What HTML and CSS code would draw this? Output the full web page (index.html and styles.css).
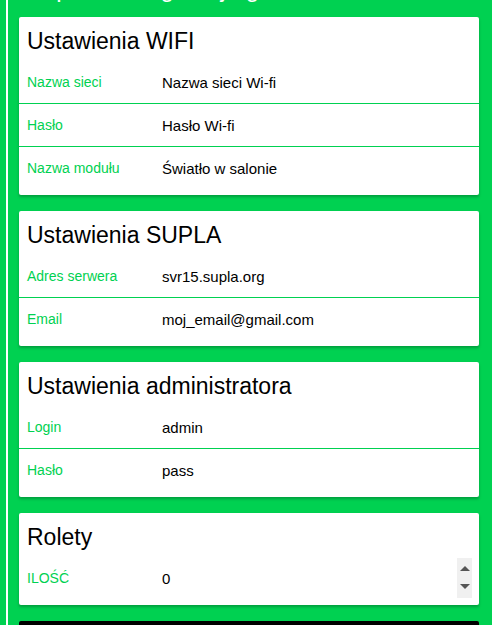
FILE: index.html
```html
<!DOCTYPE html>
<html lang="pl">
<head>
    <meta charset="UTF-8">
    <meta name="viewport" content="width=device-width, initial-scale=1.0">
    <title>Konfiguracja SUPLA</title>
    <link rel="stylesheet" href="styles.css">
</head>
<body>

<div class="page">
    <h1 class="page-title">Supla - konfiguracja gniazda</h1>

    <form id="configForm">
        <div class="box">
            <h2>Ustawienia WIFI</h2>
            <div class="row">
                <label for="sid">Nazwa sieci</label>
                <input type="text" id="sid" value="Nazwa sieci Wi-fi">
            </div>
            <div class="row">
                <label for="wpw">Hasło</label>
                <input type="text" id="wpw" value="Hasło Wi-fi">
            </div>
            <div class="row">
                <label for="modname">Nazwa modułu</label>
                <input type="text" id="modname" value="Światło w salonie">
            </div>
        </div>

        <div class="box">
            <h2>Ustawienia SUPLA</h2>
            <div class="row">
                <label for="svr">Adres serwera</label>
                <input type="text" id="svr" value="svr15.supla.org">
            </div>
            <div class="row">
                <label for="eml">Email</label>
                <input type="text" id="eml" value="moj_email@gmail.com">
            </div>
        </div>

        <div class="box">
            <h2>Ustawienia administratora</h2>
            <div class="row">
                <label for="mlg">Login</label>
                <input type="text" id="mlg" value="admin">
            </div>
            <div class="row">
                <label for="mpw">Hasło</label>
                <input type="text" id="mpw" value="pass">
            </div>
        </div>

        <div class="box">
            <h2>Rolety</h2>
            <div class="row">
                <label for="rol">ILOŚĆ</label>
                <input type="number" id="rol" value="0" min="0" max="4">
                <div class="spin">
                    <span class="spin-up"></span>
                    <span class="spin-down"></span>
                </div>
            </div>
        </div>

        <button type="button" class="save-btn">ZAPISZ</button>
    </form>
</div>

<script>
    const email = document.getElementById('eml');
    email.focus();
    email.setSelectionRange(9, 9);
</script>

</body>
</html>
```

FILE: styles.css
```css
body {
    margin: 0;
    background-color: #00d151;
    font-family: "Liberation Sans", Arial, sans-serif;
    overflow: hidden;
}
.page {
    margin-left: 6px;
    border-left: 2px solid #fff;
    padding: 0 13px 0 11px;
    min-height: 100vh;
}
.page-title {
    margin: -25px 0 14px;
    height: 28px;
    font-size: 24px;
    line-height: 28px;
    font-weight: normal;
    color: #fff;
    padding-left: 8px;
}
.box {
    background: #fff;
    border-radius: 2px;
    box-shadow: 0 2px 3px rgba(0, 0, 0, 0.25);
    margin-bottom: 16px;
    padding-bottom: 6px;
}
.box h2 {
    margin: 0;
    padding: 10px 8px 6px;
    font-size: 23px;
    line-height: 28px;
    font-weight: normal;
    color: #000;
}
.row {
    display: flex;
    align-items: center;
    padding: 1px 7px 1px 8px;
    border-bottom: 1px solid #00d151;
}
.row:last-child {
    border-bottom: none;
}
.row label {
    width: 135px;
    flex-shrink: 0;
    font-size: 14px;
    color: #00d151;
}
.row input {
    flex: 1;
    min-width: 0;
    height: 40px;
    padding: 0;
    border: none;
    outline: none;
    background: transparent;
    font-family: inherit;
    font-size: 15px;
    color: #000;
}
.row input[type=number]::-webkit-inner-spin-button {
    -webkit-appearance: none;
    display: none;
}
.spin {
    width: 15px;
    height: 40px;
    flex-shrink: 0;
    background: #f0f0f0;
    display: flex;
    flex-direction: column;
    justify-content: space-between;
    align-items: center;
    padding: 8px 0 9px;
    box-sizing: border-box;
}
.spin-up, .spin-down {
    width: 0;
    height: 0;
    border-left: 5px solid transparent;
    border-right: 5px solid transparent;
}
.spin-up {
    border-bottom: 5px solid #555;
}
.spin-down {
    border-top: 5px solid #555;
}
.save-btn {
    display: block;
    width: 100%;
    height: 40px;
    border: none;
    border-radius: 2px;
    background: #000;
    color: #fff;
    font-family: inherit;
    font-size: 16px;
}
```
